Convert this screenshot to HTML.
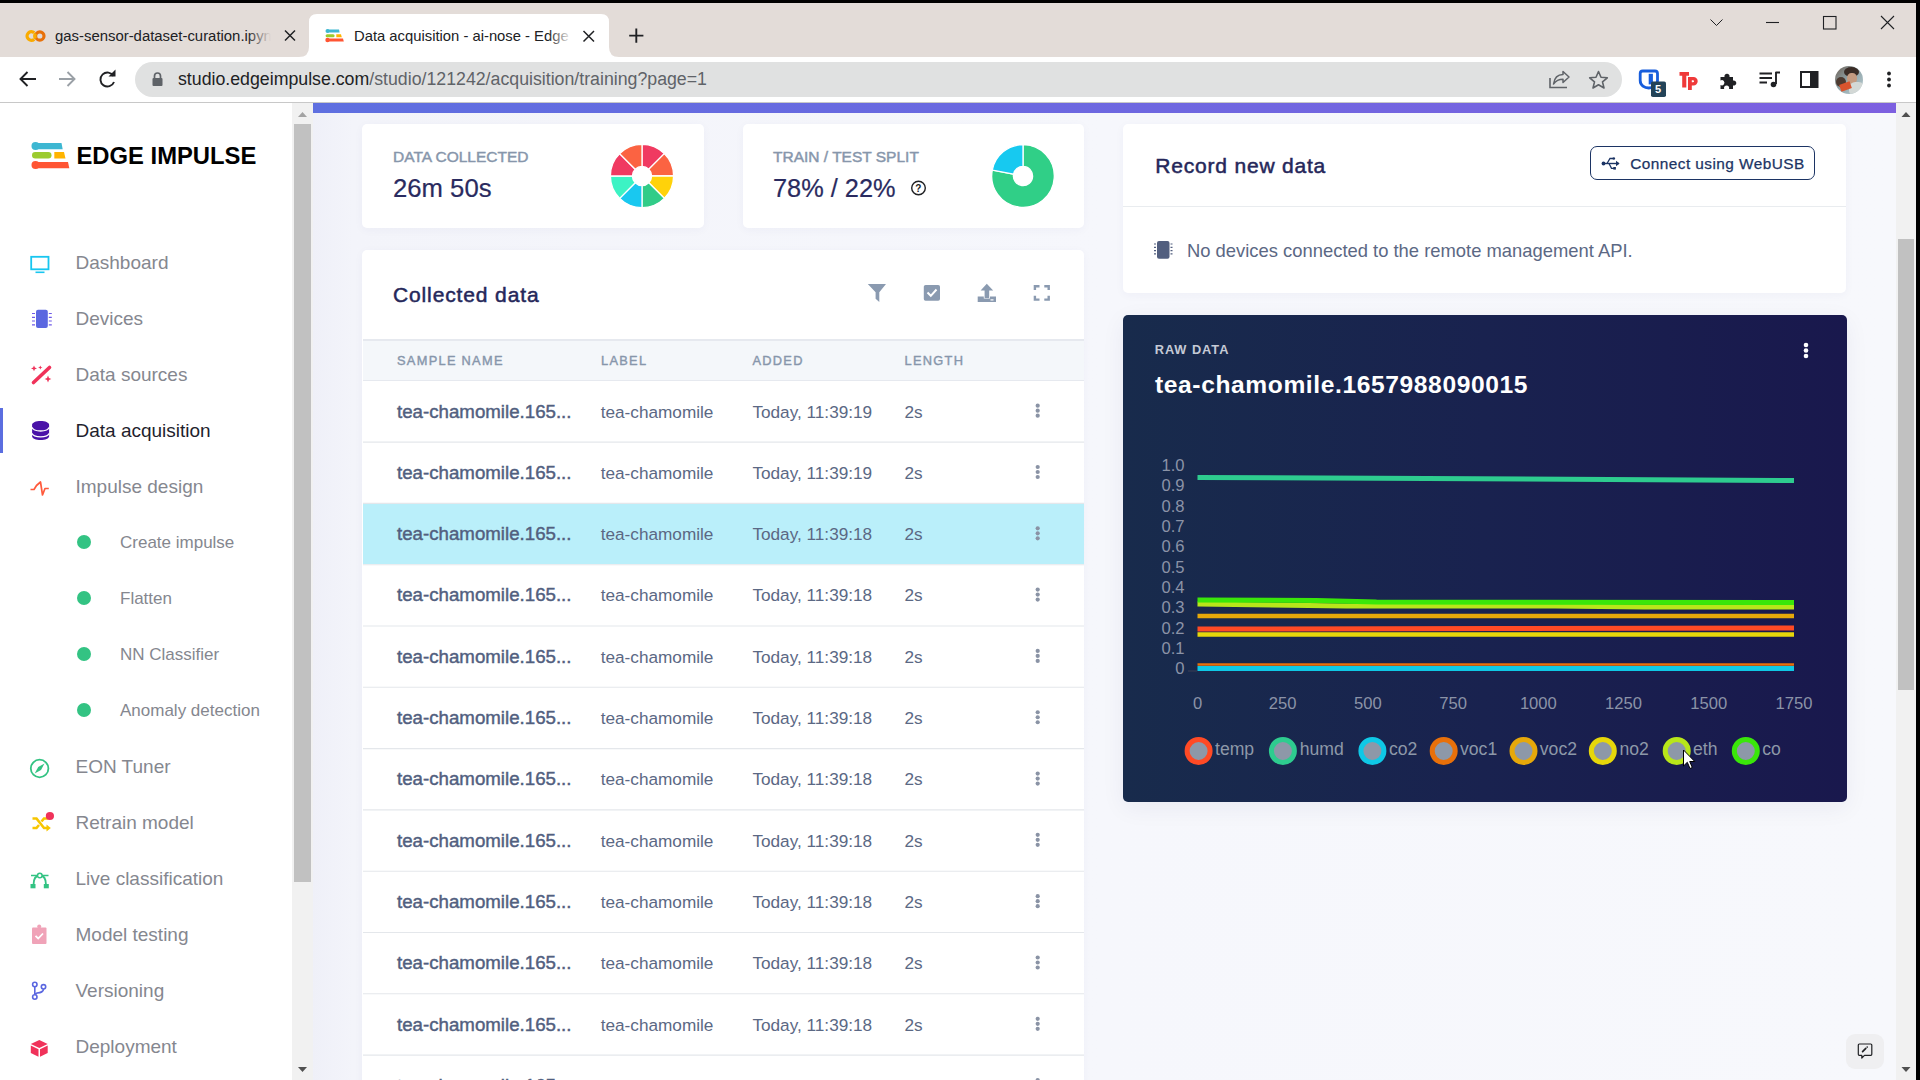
<!DOCTYPE html>
<html><head><meta charset="utf-8">
<style>
*{box-sizing:border-box;margin:0;padding:0}
html,body{width:1920px;height:1080px;overflow:hidden;background:#fff;font-family:"Liberation Sans",sans-serif}
.a{position:absolute}
.t{position:absolute;white-space:nowrap;line-height:1}
svg{position:absolute;overflow:visible}
#topblack{left:0;top:0;width:1920px;height:3px;background:#000}
#rightblack{left:1916px;top:0;width:4px;height:1080px;background:#000}
#tabstrip{left:0;top:3px;width:1916px;height:54px;background:#e3dcd8}
#toolbar{left:0;top:57px;width:1916px;height:45px;background:#fff}
#sep{left:0;top:102px;width:1916px;height:1px;background:#c8c8c8}
#omni{left:135px;top:62px;width:1487px;height:35px;border-radius:18px;background:#e0e1e1}
#sidebar{left:0;top:103px;width:292px;height:977px;background:#fff}
#sbtrack{left:292px;top:103px;width:21px;height:977px;background:#f1f1f1}
#sbthumb{left:294px;top:124px;width:17px;height:758px;background:#c1c1c1}
#main{left:313px;top:103px;width:1583px;height:977px;background:linear-gradient(90deg,#eff0f8 0,#f3f4fa 40px,#f6f7fc 50%,#f7f8fc 100%)}
#mtrack{left:1896px;top:103px;width:20px;height:977px;background:#f1f1f1}
#mthumb{left:1898px;top:239px;width:16px;height:451px;background:#c1c1c1}
#pbar{left:313px;top:103px;width:1583px;height:10px;background:linear-gradient(90deg,#5e6fe0,#7d60e0)}
.card{position:absolute;background:#fff;border-radius:5px;box-shadow:0 2px 10px rgba(50,60,120,0.04)}
</style></head><body>
<div id="topblack" class="a"></div>
<div id="tabstrip" class="a"></div>
<div id="toolbar" class="a"></div>
<div id="sep" class="a"></div>
<div id="omni" class="a"></div>
<div id="rightblack" class="a"></div>
<!-- active tab -->
<svg style="left:0;top:0" width="1920" height="60"><path d="M299 57 Q309 57 309 47 L309 22 Q309 14 317 14 L601 14 Q609 14 609 22 L609 47 Q609 57 619 57 Z" fill="#fff"/></svg>
<!-- colab favicon -->
<svg style="left:0;top:0" width="60" height="60"><path d="M34.2 32.8 A4.3 4.3 0 1 0 34.2 39.2" fill="none" stroke="#f9ab00" stroke-width="3.2"/><circle cx="39.8" cy="36" r="4.2" fill="none" stroke="#e8710a" stroke-width="3.2"/><path d="M35.6 33.5 A4.2 4.2 0 0 0 35.6 38.5" fill="none" stroke="#f9ab00" stroke-width="3.2"/></svg>
<div class="t" style="left:55px;top:29.4px;font-size:14.9px;color:#202124;width:222px;overflow:hidden">gas-sensor-dataset-curation.ipynb</div>
<div class="a" style="left:247px;top:20px;width:30px;height:30px;background:linear-gradient(90deg,rgba(227,220,216,0),#e3dcd8 80%)"></div>
<svg style="left:0;top:0" width="1920" height="60"><path d="M285 30.5 L295 40.5 M295 30.5 L285 40.5" stroke="#202124" stroke-width="1.5"/>
<path d="M583.5 31 L594 41.5 M594 31 L583.5 41.5" stroke="#202124" stroke-width="1.5"/>
<path d="M636.3 28.5 V42.7 M629.2 35.6 H643.4" stroke="#202124" stroke-width="1.9"/>
<path d="M1710.5 19.5 L1716.5 25.5 L1722.5 19.5" fill="none" stroke="#202124" stroke-width="1"/>
<path d="M1766 22.5 H1779" stroke="#202124" stroke-width="1.1"/>
<rect x="1823.5" y="16.5" width="12.5" height="12.5" fill="none" stroke="#202124" stroke-width="1.1"/>
<path d="M1881 16 L1894 29 M1894 16 L1881 29" stroke="#202124" stroke-width="1.1"/>
</svg>
<!-- EI favicon in tab -->
<svg style="left:0;top:0" width="400" height="60">
<circle cx="327.5" cy="31" r="2" fill="#3db7d2"/><path d="M327.5 29.6 H339 L339.6 32.4 H327.5 Z" fill="#3db7d2"/>
<rect x="325.6" y="34.2" width="9" height="3" rx="1.5" fill="#9ccb2e"/><path d="M336.3 34.2 H341 L341.8 37.2 H336.3 Z" fill="#ffb400"/>
<circle cx="327.5" cy="40" r="2.2" fill="#ff5533"/><path d="M327.5 38.6 H343 L343.8 41.5 H327.5 Z" fill="#ff5533"/>
</svg>
<div class="t" style="left:354px;top:29.4px;font-size:14.8px;color:#202124;width:224px;overflow:hidden">Data acquisition - ai-nose - Edge Impulse</div>
<div class="a" style="left:548px;top:20px;width:30px;height:30px;background:linear-gradient(90deg,rgba(255,255,255,0),#fff 80%)"></div>
<!-- toolbar icons -->
<svg style="left:0;top:0" width="1920" height="103">
<path d="M36 79 H20.5 M27.5 72 L20.5 79 L27.5 86" fill="none" stroke="#202124" stroke-width="1.9"/>
<path d="M59 79 H74.5 M67.5 72 L74.5 79 L67.5 86" fill="none" stroke="#9aa0a6" stroke-width="1.9"/>
<path d="M113.5 76 A7 7 0 1 0 114 82" fill="none" stroke="#202124" stroke-width="1.9"/>
<path d="M108.5 76.5 H115.5 V69.5 Z" fill="#202124"/>
<rect x="152.5" y="78" width="10" height="8" rx="1" fill="#5f6368"/>
<path d="M154.5 78 V76 A3 3 0 0 1 160.5 76 V78" fill="none" stroke="#5f6368" stroke-width="1.7"/>
</svg>
<div class="t" style="left:178px;top:70.6px;font-size:17.74px;color:#5f6368"><span style="color:#202124">studio.edgeimpulse.com</span>/studio/121242/acquisition/training?page=1</div>
<svg style="left:0;top:0" width="1920" height="103">
<!-- share -->
<path d="M1550 78 V87.5 H1567" fill="none" stroke="#5f6368" stroke-width="1.6"/>
<path d="M1553.5 84 C1554.5 77 1558.5 74.5 1563 74.5 V71.5 L1569 77 L1563 82.5 V79.2 C1559 79.2 1556 80.5 1553.5 84 Z" fill="none" stroke="#5f6368" stroke-width="1.5" stroke-linejoin="round"/>
<!-- star -->
<path d="M1598.5 71.5 L1601 77.3 L1607.3 77.8 L1602.5 81.9 L1604 88 L1598.5 84.8 L1593 88 L1594.5 81.9 L1589.7 77.8 L1596 77.3 Z" fill="none" stroke="#5f6368" stroke-width="1.6" stroke-linejoin="round"/>
<!-- bitwarden -->
<path d="M1640.2 73.5 A2.5 2.5 0 0 1 1642.7 71 H1655 A2.5 2.5 0 0 1 1657.5 73.5 V80.5 C1657.5 85.5 1653 88 1648.8 88 C1644.6 88 1640.2 85.5 1640.2 80.5 Z" fill="none" stroke="#175ddc" stroke-width="2.8"/>
<rect x="1648.7" y="73.8" width="4.2" height="10.6" fill="#175ddc"/>
<rect x="1651" y="81.5" width="15" height="15.5" rx="1.8" fill="#234358"/>
<!-- tp -->
<path d="M1679.5 72 H1689 V75.8 H1686.3 V87.5 H1682.2 V75.8 H1679.5 Z" fill="#ef3a3a"/>
<path d="M1688 77 H1693.5 A4.2 4.2 0 0 1 1693.5 85.4 H1691.8 V90 H1688 Z M1691.8 80.2 V82.3 H1693 A1.05 1.05 0 0 0 1693 80.2 Z" fill="#ef3a3a" fill-rule="evenodd"/>
<!-- puzzle -->
<path d="M1720.5 77 H1724.5 A2.6 2.6 0 1 1 1729.5 77 H1733 V80.5 A2.6 2.6 0 1 1 1733 85.5 V89 H1729 A2.6 2.6 0 1 0 1724.2 89 H1720.5 V85 A2.6 2.6 0 1 0 1720.5 80.5 Z" fill="#202124"/>
<!-- media -->
<path d="M1759.5 73.5 H1772 M1759.5 78 H1772 M1759.5 82.5 H1767" stroke="#202124" stroke-width="1.9"/>
<path d="M1775.5 72.5 H1780 M1776 72 V84" stroke="#202124" stroke-width="1.9"/>
<circle cx="1773.5" cy="84.5" r="2.8" fill="#202124"/>
<!-- sidebar -->
<rect x="1801" y="72" width="16.5" height="15" fill="none" stroke="#202124" stroke-width="2"/>
<rect x="1810" y="72" width="7.5" height="15" fill="#202124"/>
<!-- menu -->
<circle cx="1889" cy="73.5" r="1.9" fill="#202124"/><circle cx="1889" cy="79.5" r="1.9" fill="#202124"/><circle cx="1889" cy="85.5" r="1.9" fill="#202124"/>
</svg>
<div class="t" style="left:1655px;top:83.5px;font-size:11px;font-weight:bold;color:#fff">5</div>
<!-- avatar -->
<div class="a" style="left:1835px;top:66px;width:28px;height:28px;border-radius:50%;overflow:hidden;background:linear-gradient(135deg,#6d5e52 0%,#8fa3a8 45%,#b9cdd2 100%)">
<div class="a" style="left:9px;top:1px;width:15px;height:10px;border-radius:50%;background:#3a2c26"></div>
<div class="a" style="left:12px;top:7px;width:10px;height:11px;border-radius:45%;background:#c49a80"></div>
<div class="a" style="left:14px;top:16px;width:16px;height:14px;border-radius:40%;background:#d3d8d6"></div>
<div class="a" style="left:1px;top:11px;width:10px;height:10px;border-radius:50%;background:#4d3a30"></div>
<div class="a" style="left:5px;top:17px;width:11px;height:7px;transform:rotate(-20deg);background:#d9542e"></div>
</div>
<div id="sidebar" class="a"></div>
<svg style="left:0;top:0" width="300" height="200">
<circle cx="35.5" cy="146" r="4" fill="#3db7d2"/><path d="M35.5 143 H61.5 L62.7 149.2 H35.5 Z" fill="#3db7d2"/>
<rect x="32" y="152" width="19.5" height="6.5" rx="3.25" fill="#9ccb2e"/><path d="M54.3 152 H64 L65.5 158.5 H54.3 Z" fill="#ffb400"/>
<circle cx="35.5" cy="165" r="4" fill="#ff5533"/><path d="M35.5 162 H68 L69.3 168.3 H35.5 Z" fill="#ff5533"/>
</svg>
<div class="t" style="left:76.5px;top:144px;font-size:23.8px;color:#000;font-weight:bold;">EDGE IMPULSE</div><div class="t" style="left:75.5px;top:253px;font-size:19px;color:#85878f;">Dashboard</div><div class="t" style="left:75.5px;top:309px;font-size:19px;color:#85878f;">Devices</div><div class="t" style="left:75.5px;top:365px;font-size:19px;color:#85878f;">Data sources</div><div class="t" style="left:75.5px;top:421px;font-size:19px;color:#1f1f2e;">Data acquisition</div><div class="t" style="left:75.5px;top:477px;font-size:19px;color:#85878f;">Impulse design</div><div class="t" style="left:120px;top:534px;font-size:17px;color:#85878f;">Create impulse</div><div class="a" style="left:77px;top:534.5px;width:14px;height:14px;border-radius:50%;background:#33c383"></div>
<div class="t" style="left:120px;top:590px;font-size:17px;color:#85878f;">Flatten</div><div class="a" style="left:77px;top:590.5px;width:14px;height:14px;border-radius:50%;background:#33c383"></div>
<div class="t" style="left:120px;top:646px;font-size:17px;color:#85878f;">NN Classifier</div><div class="a" style="left:77px;top:646.5px;width:14px;height:14px;border-radius:50%;background:#33c383"></div>
<div class="t" style="left:120px;top:702px;font-size:17px;color:#85878f;">Anomaly detection</div><div class="a" style="left:77px;top:702.5px;width:14px;height:14px;border-radius:50%;background:#33c383"></div>
<div class="t" style="left:75.5px;top:757px;font-size:19px;color:#85878f;">EON Tuner</div><div class="t" style="left:75.5px;top:813px;font-size:19px;color:#85878f;">Retrain model</div><div class="t" style="left:75.5px;top:869px;font-size:19px;color:#85878f;">Live classification</div><div class="t" style="left:75.5px;top:925px;font-size:19px;color:#85878f;">Model testing</div><div class="t" style="left:75.5px;top:981px;font-size:19px;color:#85878f;">Versioning</div><div class="t" style="left:75.5px;top:1037px;font-size:19px;color:#85878f;">Deployment</div><div class="a" style="left:0;top:408px;width:3px;height:45px;background:#5b6ee0"></div>
<svg style="left:0;top:0" width="300" height="1080">
<rect x="31.2" y="256.8" width="17.3" height="12.5" fill="none" stroke="#18c6f0" stroke-width="1.8"/>
<rect x="35.5" y="271.5" width="9" height="1.6" fill="#18c6f0"/>
<rect x="36" y="309.8" width="11.8" height="18.3" rx="2" fill="#5b67e0"/>
<path d="M32 313.5 H35 M32 317.3 H35 M32 321 H35 M32 324.8 H35 M48.8 313.5 H51.8 M48.8 317.3 H51.8 M48.8 321 H51.8 M48.8 324.8 H51.8" stroke="#6f5ae8" stroke-width="1.2"/>
<path d="M33.5 382.5 L49.5 367.5" stroke="#f0325a" stroke-width="3.6" stroke-linecap="round"/>
<path d="M34 365.5 L34.9 367.5 L37 368.4 L34.9 369.3 L34 371.3 L33.1 369.3 L31 368.4 L33.1 367.5 Z" fill="#f0325a"/>
<path d="M40.3 365.5 L41 367 L42.5 367.5 L41 368 L40.3 369.5 L39.6 368 L38 367.5 L39.6 367 Z" fill="#f0325a"/>
<path d="M48 375.5 L49 378 L51.3 379 L49 380 L48 382.5 L47 380 L44.7 379 L47 378 Z" fill="#f0325a"/>
<path d="M32.1 424.8 C32.1 422.6 36 421 40.6 421 C45.2 421 49.1 422.6 49.1 424.8 V436.2 C49.1 438.4 45.2 440 40.6 440 C36 440 32.1 438.4 32.1 436.2 Z" fill="#4a12a8"/>
<path d="M32.1 427.3 C32.1 429.5 36 431 40.6 431 C45.2 431 49.1 429.5 49.1 427.3" fill="none" stroke="#fff" stroke-width="1.3"/>
<path d="M32.1 433.2 C32.1 435.4 36 436.9 40.6 436.9 C45.2 436.9 49.1 435.4 49.1 433.2" fill="none" stroke="#fff" stroke-width="1.3"/>
<path d="M30.5 489.5 H34 L36.5 485.5 L40.5 482 L42.5 495 L45 488.5 H48.8" fill="none" stroke="#ff5a3c" stroke-width="1.7" stroke-linejoin="round"/>
<circle cx="39.6" cy="768.5" r="8.8" fill="none" stroke="#33c383" stroke-width="1.8"/>
<path d="M44.5 763.5 L41 770 L34.7 773.5 L38.2 767 Z" fill="#33c383"/>
<path d="M32.5 818.5 H36.5 L44 828 H48.5 M32.5 828 H36.5 L39 825 M41.5 821.5 L44 818.5 H48.5" fill="none" stroke="#f7c600" stroke-width="2.6"/>
<path d="M46.5 824.5 L50.8 828 L46.5 831.5 Z" fill="#f7c600"/>
<circle cx="49.9" cy="816" r="4.1" fill="#f0325a"/>
<path d="M33.5 885 C33.5 878 36 875.5 39.8 875.5 C43.5 875.5 46 878 46 885" fill="none" stroke="#33c383" stroke-width="1.8"/>
<circle cx="39.8" cy="875.5" r="2.3" fill="#fff" stroke="#33c383" stroke-width="1.5"/>
<path d="M31 875.5 H37.5 M42 875.5 H48.5" stroke="#33c383" stroke-width="1.3"/>
<rect x="30.5" y="884" width="5" height="4.3" fill="#33c383"/><rect x="43.8" y="884" width="5" height="4.3" fill="#33c383"/>
<rect x="32" y="927.5" width="14.5" height="16.5" rx="1" fill="#f0a3b8"/>
<circle cx="39.2" cy="926.5" r="2" fill="#f0a3b8"/>
<path d="M35.5 935.8 L38.2 938.5 L43 933.5" fill="none" stroke="#fff" stroke-width="1.8"/>
<circle cx="34.8" cy="984.5" r="2.2" fill="none" stroke="#5b67e0" stroke-width="1.6"/>
<circle cx="43.5" cy="986.8" r="2.2" fill="none" stroke="#5b67e0" stroke-width="1.6"/>
<circle cx="34.8" cy="997" r="2.2" fill="none" stroke="#5b67e0" stroke-width="1.6"/>
<path d="M34.8 986.7 V994.8 M43.5 989 C43.5 992 41 992.5 37 993 L35 994.5" fill="none" stroke="#5b67e0" stroke-width="1.6"/>
<path d="M39.3 1040 L47.7 1044 L39.3 1048 L30.8 1044 Z" fill="#f0325a"/>
<path d="M30.8 1045.5 L38.5 1049.3 V1056.8 L30.8 1053 Z" fill="#f0325a"/>
<path d="M47.7 1045.5 L40 1049.3 V1056.8 L47.7 1053 Z" fill="#f0325a"/>
</svg>
<div id="sbtrack" class="a"></div><div id="sbthumb" class="a"></div>
<svg style="left:0;top:0" width="1920" height="1080"><path d="M298 117 L302.5 112 L307 117 Z" fill="#a3a3a3"/><path d="M298 1067 L302.5 1072 L307 1067 Z" fill="#505050"/></svg>
<div id="main" class="a"></div><div id="mtrack" class="a"></div><div id="mthumb" class="a"></div><div id="pbar" class="a"></div>
<svg style="left:0;top:0" width="1920" height="1080"><path d="M1901.5 117 L1906 112 L1910.5 117 Z" fill="#505050"/><path d="M1901.5 1067 L1906 1072 L1910.5 1067 Z" fill="#505050"/></svg>
<div class="card" style="left:362px;top:124px;width:342px;height:104px"></div>
<div class="card" style="left:743px;top:124px;width:341px;height:104px"></div>
<div class="card" style="left:362px;top:250px;width:722px;height:840px"></div>
<div class="card" style="left:1123px;top:124px;width:723px;height:169px"></div>
<div class="card" style="left:1123px;top:315px;width:724px;height:487px;background:linear-gradient(90deg,#182b4c 0%,#19224f 50%,#19184d 100%);box-shadow:0 6px 24px rgba(30,30,90,0.06)"></div>
<div class="t" style="left:393px;top:149px;font-size:15.5px;color:#8796ab;-webkit-text-stroke:0.45px #8796ab;">DATA COLLECTED</div><div class="t" style="left:393px;top:176px;font-size:25.7px;color:#2a2b60;-webkit-text-stroke:0.2px #2a2b60;">26m 50s</div><div class="t" style="left:773px;top:149px;font-size:15.5px;color:#8796ab;-webkit-text-stroke:0.45px #8796ab;">TRAIN / TEST SPLIT</div><div class="t" style="left:773px;top:176px;font-size:25.35px;color:#2a2b60;-webkit-text-stroke:0.2px #2a2b60;">78% / 22%</div><svg style="left:0;top:0" width="1920" height="260"><path d="M642.00 144.40 A31.6 31.6 0 0 1 664.34 153.66 L648.79 169.21 A9.6 9.6 0 0 0 642.00 166.40 Z" fill="#f03a61" stroke="#fff" stroke-width="1.3"/><path d="M664.34 153.66 A31.6 31.6 0 0 1 673.60 176.00 L651.60 176.00 A9.6 9.6 0 0 0 648.79 169.21 Z" fill="#fb6342" stroke="#fff" stroke-width="1.3"/><path d="M673.60 176.00 A31.6 31.6 0 0 1 664.34 198.34 L648.79 182.79 A9.6 9.6 0 0 0 651.60 176.00 Z" fill="#ffd20a" stroke="#fff" stroke-width="1.3"/><path d="M664.34 198.34 A31.6 31.6 0 0 1 642.00 207.60 L642.00 185.60 A9.6 9.6 0 0 0 648.79 182.79 Z" fill="#31cc88" stroke="#fff" stroke-width="1.3"/><path d="M642.00 207.60 A31.6 31.6 0 0 1 619.66 198.34 L635.21 182.79 A9.6 9.6 0 0 0 642.00 185.60 Z" fill="#19c8f0" stroke="#fff" stroke-width="1.3"/><path d="M619.66 198.34 A31.6 31.6 0 0 1 610.40 176.00 L632.40 176.00 A9.6 9.6 0 0 0 635.21 182.79 Z" fill="#3cf3c4" stroke="#fff" stroke-width="1.3"/><path d="M610.40 176.00 A31.6 31.6 0 0 1 619.66 153.66 L635.21 169.21 A9.6 9.6 0 0 0 632.40 176.00 Z" fill="#f03a61" stroke="#fff" stroke-width="1.3"/><path d="M619.66 153.66 A31.6 31.6 0 0 1 642.00 144.40 L642.00 166.40 A9.6 9.6 0 0 0 635.21 169.21 Z" fill="#fb6342" stroke="#fff" stroke-width="1.3"/><path d="M1023.00 144.70 A31.3 31.3 0 1 1 992.28 170.03 L1013.58 174.17 A9.6 9.6 0 1 0 1023.00 166.40 Z" fill="#30cf87" stroke="#fff" stroke-width="1.3"/><path d="M992.28 170.03 A31.3 31.3 0 0 1 1023.00 144.70 L1023.00 166.40 A9.6 9.6 0 0 0 1013.58 174.17 Z" fill="#17c9f0" stroke="#fff" stroke-width="1.3"/><circle cx="918.5" cy="188" r="6.8" fill="none" stroke="#202124" stroke-width="1.4"/></svg>
<div class="t" style="left:915.2px;top:184px;font-size:10px;color:#202124;font-weight:bold;">?</div><div class="t" style="left:393px;top:284px;font-size:21px;color:#25275a;letter-spacing:0.87px;-webkit-text-stroke:0.5px #25275a;">Collected data</div><svg style="left:0;top:0" width="1920" height="320">
<path d="M867.8 284 H886 L879.3 292.3 V302 L875.6 298.8 V292.3 Z" fill="#8a9ab0"/>
<rect x="923.8" y="285" width="16.2" height="15.8" rx="1.8" fill="#8a9ab0"/>
<path d="M927.5 292.5 L930.8 295.8 L936.5 289.5" fill="none" stroke="#fff" stroke-width="2"/>
<path d="M986.8 283.8 L993.2 290.6 H989.2 V298 H984.6 V290.6 H980.6 Z" fill="#8a9ab0"/>
<path d="M977.7 296.4 H983.8 V298.6 H990 V296.4 H996 V302 H977.7 Z" fill="#8a9ab0"/>
<rect x="990.5" y="299.3" width="3" height="1.2" fill="#fff"/>
<path d="M1034.9 290 V286.2 H1039.5 M1044.3 286.2 H1048.7 V290 M1048.7 295.8 V299.6 H1044.3 M1039.5 299.6 H1034.9 V295.8" fill="none" stroke="#8a9ab0" stroke-width="2.4"/>
</svg>
<div class="a" style="left:363px;top:339px;width:721px;height:2px;background:#e6e9ef"></div>
<div class="a" style="left:363px;top:341px;width:721px;height:40px;background:#f4f7fa;border-bottom:1px solid #e6e9ef"></div>
<div class="t" style="left:397px;top:355px;font-size:12.8px;color:#8796ab;letter-spacing:1.3px;-webkit-text-stroke:0.4px #8796ab;">SAMPLE NAME</div><div class="t" style="left:601px;top:355px;font-size:12.8px;color:#8796ab;letter-spacing:1.3px;-webkit-text-stroke:0.4px #8796ab;">LABEL</div><div class="t" style="left:752.4px;top:355px;font-size:12.8px;color:#8796ab;letter-spacing:1.3px;-webkit-text-stroke:0.4px #8796ab;">ADDED</div><div class="t" style="left:904.5px;top:355px;font-size:12.8px;color:#8796ab;letter-spacing:1.3px;-webkit-text-stroke:0.4px #8796ab;">LENGTH</div><div class="t" style="left:397px;top:403px;font-size:18.7px;color:#525f7f;-webkit-text-stroke:0.45px #525f7f;">tea-chamomile.165...</div><div class="t" style="left:600.7px;top:404px;font-size:17.2px;color:#5b6884;">tea-chamomile</div><div class="t" style="left:752.4px;top:404px;font-size:17.2px;color:#5b6884;">Today, 11:39:19</div><div class="t" style="left:904.5px;top:404px;font-size:17.2px;color:#5b6884;">2s</div><svg style="left:0;top:0" width="1100" height="1100"><path d="M363 442.10 H1084" stroke="#e4e7eb" stroke-width="1.1"/></svg>
<div class="t" style="left:397px;top:464px;font-size:18.7px;color:#525f7f;-webkit-text-stroke:0.45px #525f7f;">tea-chamomile.165...</div><div class="t" style="left:600.7px;top:465px;font-size:17.2px;color:#5b6884;">tea-chamomile</div><div class="t" style="left:752.4px;top:465px;font-size:17.2px;color:#5b6884;">Today, 11:39:19</div><div class="t" style="left:904.5px;top:465px;font-size:17.2px;color:#5b6884;">2s</div><svg style="left:0;top:0" width="1100" height="1100"><path d="M363 503.40 H1084" stroke="#e4e7eb" stroke-width="1.1"/></svg>
<div class="a" style="left:363px;top:503.5px;width:721px;height:60.8px;background:#baeffa"></div>
<div class="t" style="left:397px;top:525px;font-size:18.7px;color:#525f7f;-webkit-text-stroke:0.45px #525f7f;">tea-chamomile.165...</div><div class="t" style="left:600.7px;top:526px;font-size:17.2px;color:#5b6884;">tea-chamomile</div><div class="t" style="left:752.4px;top:526px;font-size:17.2px;color:#5b6884;">Today, 11:39:18</div><div class="t" style="left:904.5px;top:526px;font-size:17.2px;color:#5b6884;">2s</div><svg style="left:0;top:0" width="1100" height="1100"><path d="M363 564.70 H1084" stroke="#e4e7eb" stroke-width="1.1"/></svg>
<div class="t" style="left:397px;top:586px;font-size:18.7px;color:#525f7f;-webkit-text-stroke:0.45px #525f7f;">tea-chamomile.165...</div><div class="t" style="left:600.7px;top:587px;font-size:17.2px;color:#5b6884;">tea-chamomile</div><div class="t" style="left:752.4px;top:587px;font-size:17.2px;color:#5b6884;">Today, 11:39:18</div><div class="t" style="left:904.5px;top:587px;font-size:17.2px;color:#5b6884;">2s</div><svg style="left:0;top:0" width="1100" height="1100"><path d="M363 626.00 H1084" stroke="#e4e7eb" stroke-width="1.1"/></svg>
<div class="t" style="left:397px;top:648px;font-size:18.7px;color:#525f7f;-webkit-text-stroke:0.45px #525f7f;">tea-chamomile.165...</div><div class="t" style="left:600.7px;top:649px;font-size:17.2px;color:#5b6884;">tea-chamomile</div><div class="t" style="left:752.4px;top:649px;font-size:17.2px;color:#5b6884;">Today, 11:39:18</div><div class="t" style="left:904.5px;top:649px;font-size:17.2px;color:#5b6884;">2s</div><svg style="left:0;top:0" width="1100" height="1100"><path d="M363 687.30 H1084" stroke="#e4e7eb" stroke-width="1.1"/></svg>
<div class="t" style="left:397px;top:709px;font-size:18.7px;color:#525f7f;-webkit-text-stroke:0.45px #525f7f;">tea-chamomile.165...</div><div class="t" style="left:600.7px;top:710px;font-size:17.2px;color:#5b6884;">tea-chamomile</div><div class="t" style="left:752.4px;top:710px;font-size:17.2px;color:#5b6884;">Today, 11:39:18</div><div class="t" style="left:904.5px;top:710px;font-size:17.2px;color:#5b6884;">2s</div><svg style="left:0;top:0" width="1100" height="1100"><path d="M363 748.60 H1084" stroke="#e4e7eb" stroke-width="1.1"/></svg>
<div class="t" style="left:397px;top:770px;font-size:18.7px;color:#525f7f;-webkit-text-stroke:0.45px #525f7f;">tea-chamomile.165...</div><div class="t" style="left:600.7px;top:771px;font-size:17.2px;color:#5b6884;">tea-chamomile</div><div class="t" style="left:752.4px;top:771px;font-size:17.2px;color:#5b6884;">Today, 11:39:18</div><div class="t" style="left:904.5px;top:771px;font-size:17.2px;color:#5b6884;">2s</div><svg style="left:0;top:0" width="1100" height="1100"><path d="M363 809.90 H1084" stroke="#e4e7eb" stroke-width="1.1"/></svg>
<div class="t" style="left:397px;top:832px;font-size:18.7px;color:#525f7f;-webkit-text-stroke:0.45px #525f7f;">tea-chamomile.165...</div><div class="t" style="left:600.7px;top:833px;font-size:17.2px;color:#5b6884;">tea-chamomile</div><div class="t" style="left:752.4px;top:833px;font-size:17.2px;color:#5b6884;">Today, 11:39:18</div><div class="t" style="left:904.5px;top:833px;font-size:17.2px;color:#5b6884;">2s</div><svg style="left:0;top:0" width="1100" height="1100"><path d="M363 871.20 H1084" stroke="#e4e7eb" stroke-width="1.1"/></svg>
<div class="t" style="left:397px;top:893px;font-size:18.7px;color:#525f7f;-webkit-text-stroke:0.45px #525f7f;">tea-chamomile.165...</div><div class="t" style="left:600.7px;top:894px;font-size:17.2px;color:#5b6884;">tea-chamomile</div><div class="t" style="left:752.4px;top:894px;font-size:17.2px;color:#5b6884;">Today, 11:39:18</div><div class="t" style="left:904.5px;top:894px;font-size:17.2px;color:#5b6884;">2s</div><svg style="left:0;top:0" width="1100" height="1100"><path d="M363 932.50 H1084" stroke="#e4e7eb" stroke-width="1.1"/></svg>
<div class="t" style="left:397px;top:954px;font-size:18.7px;color:#525f7f;-webkit-text-stroke:0.45px #525f7f;">tea-chamomile.165...</div><div class="t" style="left:600.7px;top:955px;font-size:17.2px;color:#5b6884;">tea-chamomile</div><div class="t" style="left:752.4px;top:955px;font-size:17.2px;color:#5b6884;">Today, 11:39:18</div><div class="t" style="left:904.5px;top:955px;font-size:17.2px;color:#5b6884;">2s</div><svg style="left:0;top:0" width="1100" height="1100"><path d="M363 993.80 H1084" stroke="#e4e7eb" stroke-width="1.1"/></svg>
<div class="t" style="left:397px;top:1016px;font-size:18.7px;color:#525f7f;-webkit-text-stroke:0.45px #525f7f;">tea-chamomile.165...</div><div class="t" style="left:600.7px;top:1017px;font-size:17.2px;color:#5b6884;">tea-chamomile</div><div class="t" style="left:752.4px;top:1017px;font-size:17.2px;color:#5b6884;">Today, 11:39:18</div><div class="t" style="left:904.5px;top:1017px;font-size:17.2px;color:#5b6884;">2s</div><svg style="left:0;top:0" width="1100" height="1100"><path d="M363 1055.10 H1084" stroke="#e4e7eb" stroke-width="1.1"/></svg>
<div class="t" style="left:397px;top:1077px;font-size:18.7px;color:#525f7f;-webkit-text-stroke:0.45px #525f7f;">tea-chamomile.165...</div><div class="t" style="left:600.7px;top:1078px;font-size:17.2px;color:#5b6884;">tea-chamomile</div><div class="t" style="left:752.4px;top:1078px;font-size:17.2px;color:#5b6884;">Today, 11:39:18</div><div class="t" style="left:904.5px;top:1078px;font-size:17.2px;color:#5b6884;">2s</div><svg style="left:0;top:0" width="1100" height="1100"><circle cx="1037.7" cy="405.69" r="2.1" fill="#8a93a5"/><circle cx="1037.7" cy="410.69" r="2.1" fill="#8a93a5"/><circle cx="1037.7" cy="415.69" r="2.1" fill="#8a93a5"/><circle cx="1037.7" cy="467.00" r="2.1" fill="#8a93a5"/><circle cx="1037.7" cy="472.00" r="2.1" fill="#8a93a5"/><circle cx="1037.7" cy="477.00" r="2.1" fill="#8a93a5"/><circle cx="1037.7" cy="528.31" r="2.1" fill="#8a93a5"/><circle cx="1037.7" cy="533.31" r="2.1" fill="#8a93a5"/><circle cx="1037.7" cy="538.31" r="2.1" fill="#8a93a5"/><circle cx="1037.7" cy="589.62" r="2.1" fill="#8a93a5"/><circle cx="1037.7" cy="594.62" r="2.1" fill="#8a93a5"/><circle cx="1037.7" cy="599.62" r="2.1" fill="#8a93a5"/><circle cx="1037.7" cy="650.93" r="2.1" fill="#8a93a5"/><circle cx="1037.7" cy="655.93" r="2.1" fill="#8a93a5"/><circle cx="1037.7" cy="660.93" r="2.1" fill="#8a93a5"/><circle cx="1037.7" cy="712.24" r="2.1" fill="#8a93a5"/><circle cx="1037.7" cy="717.24" r="2.1" fill="#8a93a5"/><circle cx="1037.7" cy="722.24" r="2.1" fill="#8a93a5"/><circle cx="1037.7" cy="773.55" r="2.1" fill="#8a93a5"/><circle cx="1037.7" cy="778.55" r="2.1" fill="#8a93a5"/><circle cx="1037.7" cy="783.55" r="2.1" fill="#8a93a5"/><circle cx="1037.7" cy="834.86" r="2.1" fill="#8a93a5"/><circle cx="1037.7" cy="839.86" r="2.1" fill="#8a93a5"/><circle cx="1037.7" cy="844.86" r="2.1" fill="#8a93a5"/><circle cx="1037.7" cy="896.17" r="2.1" fill="#8a93a5"/><circle cx="1037.7" cy="901.17" r="2.1" fill="#8a93a5"/><circle cx="1037.7" cy="906.17" r="2.1" fill="#8a93a5"/><circle cx="1037.7" cy="957.48" r="2.1" fill="#8a93a5"/><circle cx="1037.7" cy="962.48" r="2.1" fill="#8a93a5"/><circle cx="1037.7" cy="967.48" r="2.1" fill="#8a93a5"/><circle cx="1037.7" cy="1018.79" r="2.1" fill="#8a93a5"/><circle cx="1037.7" cy="1023.79" r="2.1" fill="#8a93a5"/><circle cx="1037.7" cy="1028.79" r="2.1" fill="#8a93a5"/><circle cx="1037.7" cy="1080.10" r="2.1" fill="#8a93a5"/><circle cx="1037.7" cy="1085.10" r="2.1" fill="#8a93a5"/><circle cx="1037.7" cy="1090.10" r="2.1" fill="#8a93a5"/></svg>
<div class="t" style="left:1155.3px;top:155px;font-size:21px;color:#25275a;letter-spacing:0.8px;-webkit-text-stroke:0.5px #25275a;">Record new data</div><div class="a" style="left:1123px;top:206px;width:723px;height:1px;background:#e9ecef"></div>
<div class="a" style="left:1590.2px;top:146.3px;width:225.2px;height:34px;border:1.5px solid #1c3464;border-radius:7px"></div>
<div class="t" style="left:1630.3px;top:156px;font-size:15.4px;color:#1c3464;letter-spacing:0.43px;-webkit-text-stroke:0.25px #1c3464;">Connect using WebUSB</div><svg style="left:0;top:0" width="1920" height="300">
<circle cx="1603.5" cy="163.5" r="1.9" fill="#1c3464"/>
<path d="M1603.5 163.5 H1619" stroke="#1c3464" stroke-width="1.4"/>
<path d="M1616 160.8 L1619.6 163.5 L1616 166.2 Z" fill="#1c3464"/>
<path d="M1607 163.5 L1610 158.5 H1613" fill="none" stroke="#1c3464" stroke-width="1.3"/>
<path d="M1609 163.5 L1611.5 168.3 H1614" fill="none" stroke="#1c3464" stroke-width="1.3"/>
<circle cx="1613.8" cy="158.5" r="1.3" fill="#1c3464"/>
<rect x="1613.3" y="167" width="2.6" height="2.6" fill="#1c3464"/>
<rect x="1157" y="241" width="12.5" height="17.7" rx="2" fill="#525f7f"/>
<path d="M1154 244 H1156 M1154 247.3 H1156 M1154 250.6 H1156 M1154 253.9 H1156 M1170.5 244 H1172.5 M1170.5 247.3 H1172.5 M1170.5 250.6 H1172.5 M1170.5 253.9 H1172.5" stroke="#525f7f" stroke-width="1.2"/>
</svg>
<div class="t" style="left:1187px;top:242px;font-size:18.4px;color:#5b6884;">No devices connected to the remote management API.</div><div class="t" style="left:1154.7px;top:344px;font-size:12.8px;color:#c5cad6;font-weight:bold;letter-spacing:0.95px;">RAW DATA</div><div class="t" style="left:1155px;top:373px;font-size:24.6px;color:#ffffff;font-weight:bold;letter-spacing:0.6px;">tea-chamomile.1657988090015</div><svg style="left:0;top:0" width="1920" height="1080"><circle cx="1806" cy="345" r="2.3" fill="#fff"/><circle cx="1806" cy="350.5" r="2.3" fill="#fff"/><circle cx="1806" cy="356" r="2.3" fill="#fff"/></svg>
<div class="t" style="right:735.5px;text-align:right;top:458px;font-size:16.6px;color:#8b93a7;">1.0</div><div class="t" style="right:735.5px;text-align:right;top:478px;font-size:16.6px;color:#8b93a7;">0.9</div><div class="t" style="right:735.5px;text-align:right;top:499px;font-size:16.6px;color:#8b93a7;">0.8</div><div class="t" style="right:735.5px;text-align:right;top:519px;font-size:16.6px;color:#8b93a7;">0.7</div><div class="t" style="right:735.5px;text-align:right;top:539px;font-size:16.6px;color:#8b93a7;">0.6</div><div class="t" style="right:735.5px;text-align:right;top:560px;font-size:16.6px;color:#8b93a7;">0.5</div><div class="t" style="right:735.5px;text-align:right;top:580px;font-size:16.6px;color:#8b93a7;">0.4</div><div class="t" style="right:735.5px;text-align:right;top:600px;font-size:16.6px;color:#8b93a7;">0.3</div><div class="t" style="right:735.5px;text-align:right;top:621px;font-size:16.6px;color:#8b93a7;">0.2</div><div class="t" style="right:735.5px;text-align:right;top:641px;font-size:16.6px;color:#8b93a7;">0.1</div><div class="t" style="right:735.5px;text-align:right;top:661px;font-size:16.6px;color:#8b93a7;">0</div><div class="t" style="left:1097.5px;width:200px;text-align:center;top:696px;font-size:16.6px;color:#8b93a7;">0</div><div class="t" style="left:1182.7142857142858px;width:200px;text-align:center;top:696px;font-size:16.6px;color:#8b93a7;">250</div><div class="t" style="left:1267.9285714285713px;width:200px;text-align:center;top:696px;font-size:16.6px;color:#8b93a7;">500</div><div class="t" style="left:1353.142857142857px;width:200px;text-align:center;top:696px;font-size:16.6px;color:#8b93a7;">750</div><div class="t" style="left:1438.357142857143px;width:200px;text-align:center;top:696px;font-size:16.6px;color:#8b93a7;">1000</div><div class="t" style="left:1523.5714285714284px;width:200px;text-align:center;top:696px;font-size:16.6px;color:#8b93a7;">1250</div><div class="t" style="left:1608.7857142857142px;width:200px;text-align:center;top:696px;font-size:16.6px;color:#8b93a7;">1500</div><div class="t" style="left:1694.0px;width:200px;text-align:center;top:696px;font-size:16.6px;color:#8b93a7;">1750</div><svg style="left:0;top:0" width="1920" height="1080"><path d="M1188 671 H1197" stroke="#3a3f55" stroke-width="1"/><path d="M1197.5 477.5 L1376.5 478.2 L1794.0 480.5" fill="none" stroke="#2ecc8f" stroke-width="5" stroke-linejoin="round"/><path d="M1197.5 604.0 L1346.6 606.0 L1555.4 606.0 L1644.9 607.0 L1794.0 607.0" fill="none" stroke="#b8e61a" stroke-width="5" stroke-linejoin="round"/><path d="M1197.5 600.0 L1316.8 600.5 L1376.5 602.0 L1794.0 602.5" fill="none" stroke="#3ae60a" stroke-width="5" stroke-linejoin="round"/><path d="M1197.5 616.0 L1794.0 616.0" fill="none" stroke="#e6a80a" stroke-width="4.5" stroke-linejoin="round"/><path d="M1197.5 634.5 L1794.0 634.5" fill="none" stroke="#e6d70a" stroke-width="4.5" stroke-linejoin="round"/><path d="M1197.5 629.0 L1495.8 628.5 L1794.0 628.0" fill="none" stroke="#ff4a25" stroke-width="5" stroke-linejoin="round"/><path d="M1197.5 664.5 L1794.0 664.5" fill="none" stroke="#e8700a" stroke-width="2.5" stroke-linejoin="round"/><path d="M1197.5 668.5 L1794.0 668.5" fill="none" stroke="#0fc8e6" stroke-width="5" stroke-linejoin="round"/></svg>
<svg style="left:0;top:0" width="1920" height="1080"><circle cx="1198.6" cy="751" r="11.5" fill="#8d98a8" stroke="#ff4a25" stroke-width="5"/><circle cx="1282.9" cy="751" r="11.5" fill="#8d98a8" stroke="#2ecc8f" stroke-width="5"/><circle cx="1372.4" cy="751" r="11.5" fill="#8d98a8" stroke="#0fc8e6" stroke-width="5"/><circle cx="1443.7" cy="751" r="11.5" fill="#8d98a8" stroke="#e8700a" stroke-width="5"/><circle cx="1523.5" cy="751" r="11.5" fill="#8d98a8" stroke="#e6a80a" stroke-width="5"/><circle cx="1602.8" cy="751" r="11.5" fill="#8d98a8" stroke="#e6d70a" stroke-width="5"/><circle cx="1676.7" cy="751" r="11.5" fill="#8d98a8" stroke="#b8e61a" stroke-width="5"/><circle cx="1745.8" cy="751" r="11.5" fill="#8d98a8" stroke="#3ae60a" stroke-width="5"/></svg>
<div class="t" style="left:1215px;top:741px;font-size:17.6px;color:#8d98a8;">temp</div><div class="t" style="left:1299.7px;top:741px;font-size:17.6px;color:#8d98a8;">humd</div><div class="t" style="left:1389px;top:741px;font-size:17.6px;color:#8d98a8;">co2</div><div class="t" style="left:1460px;top:741px;font-size:17.6px;color:#8d98a8;">voc1</div><div class="t" style="left:1539.8px;top:741px;font-size:17.6px;color:#8d98a8;">voc2</div><div class="t" style="left:1619.5px;top:741px;font-size:17.6px;color:#8d98a8;">no2</div><div class="t" style="left:1693px;top:741px;font-size:17.6px;color:#8d98a8;">eth</div><div class="t" style="left:1762.3px;top:741px;font-size:17.6px;color:#8d98a8;">co</div><svg style="left:0;top:0" width="1920" height="1080"><path d="M1683.5 750 V766 L1687.3 762.3 L1690 768.5 L1692.3 767.5 L1689.7 761.5 H1694.8 Z" fill="#fff" stroke="#000" stroke-width="1" stroke-linejoin="round"/></svg>
<div class="a" style="left:1846px;top:1034px;width:38px;height:35px;border-radius:9px;background:#efeff1"></div>
<svg style="left:0;top:0" width="1920" height="1080"><path d="M1858.3 1045 A1 1 0 0 1 1859.3 1044 H1870.8 A1 1 0 0 1 1871.8 1045 V1054.3 A1 1 0 0 1 1870.8 1055.3 H1864.5 L1861.8 1058 V1055.3 H1859.3 A1 1 0 0 1 1858.3 1054.3 Z" fill="none" stroke="#202124" stroke-width="1.2" stroke-linejoin="round"/><path d="M1862.6 1051.6 L1865.8 1048.4" stroke="#202124" stroke-width="1.7" stroke-linecap="round"/><circle cx="1867.2" cy="1047.1" r="0.8" fill="#202124"/></svg>
</body></html>
